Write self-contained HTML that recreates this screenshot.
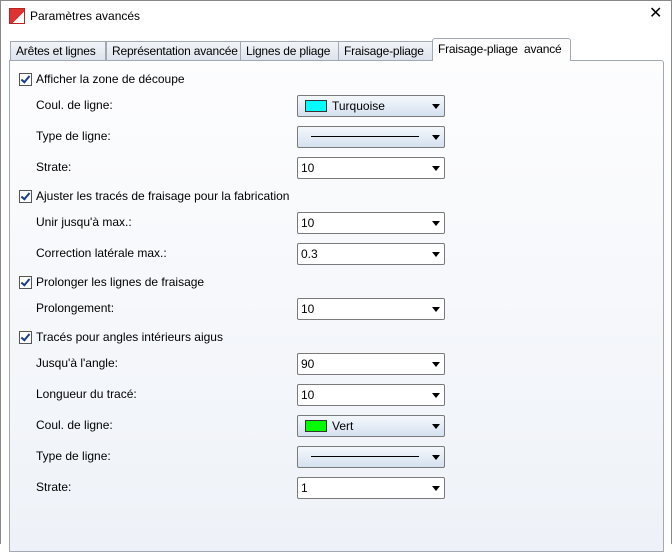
<!DOCTYPE html><html><head><style>
body{margin:0;width:672px;height:543px;background:#fff;font-family:"Liberation Sans",sans-serif;font-size:12px;color:#000;position:relative;overflow:hidden}
.win{position:absolute;left:0;top:0;width:670px;height:543px;border-left:1px solid #888;border-right:1px solid #888;border-top:1px solid #888}
.abs{position:absolute}
.tab{position:absolute;top:41px;height:19px;border:1px solid #a0a8b4;border-bottom:none;background:linear-gradient(#f2f4f8,#dde3ec);line-height:18px;padding:0 5px;font-size:12px;box-sizing:border-box;white-space:nowrap;overflow:hidden;letter-spacing:-0.2px}
.panel{position:absolute;left:9px;top:60px;width:653px;height:490px;border:1px solid #a0a8b4;border-radius:0 3px 0 0;background:linear-gradient(#fdfdfe,#eef2f8)}
.cb{position:absolute;left:19px;width:11px;height:11px;border:1px solid #555;background:#fff}
.cb:after{content:"";position:absolute;left:3px;top:0px;width:3px;height:7px;border:solid #1a3a8a;border-width:0 2px 2px 0;transform:rotate(40deg)}
.lbl{position:absolute;left:36px;line-height:14px;white-space:nowrap}
.cl{position:absolute;left:36px;line-height:14px;white-space:nowrap}
.combo{position:absolute;left:297px;width:146px;height:20px;border:1px solid #7a7a7a;border-radius:2px;background:#fff}
.combo.g{background:linear-gradient(#f4f8fc,#d5e1f0)}
.combo .t{position:absolute;left:3px;top:3px}
.combo .ar{position:absolute;right:4px;top:8px;border-left:4px solid transparent;border-right:4px solid transparent;border-top:5px solid #000}
.sw{position:absolute;left:7px;top:4px;width:20px;height:10px;border:1px solid #333}
.line{position:absolute;left:13px;top:9px;width:108px;height:1px;background:#000}
</style></head><body>
<div class="win"></div>
<div class="abs" style="left:9px;top:8px;width:14px;height:14px;background:linear-gradient(135deg,#d33 0 60%,#fff 60%);border:1px solid #b22"></div>
<div class="abs" style="left:30px;top:9px;font-size:12px">Paramètres avancés</div>
<div class="abs" style="left:649px;top:3px;font-size:16px">✕</div>
<div class="panel"></div>
<div class="tab" style="left:10px;width:96px">Arêtes et lignes</div>
<div class="tab" style="left:106px;width:135px">Représentation avancée</div>
<div class="tab" style="left:240px;width:99px">Lignes de pliage</div>
<div class="tab" style="left:338px;width:95px">Fraisage-pliage</div>
<div class="tab" style="left:432px;top:38px;height:23px;width:139px;background:#fdfdfe;line-height:20px;border-radius:3px 3px 0 0">Fraisage-pliage&nbsp; avancé</div>

<div class="cb" style="top:73px"></div><div class="lbl" style="top:72px">Afficher la zone de découpe</div>
<div class="cl" style="top:98px">Coul. de ligne:</div>
<div class="combo g" style="top:95px"><div class="sw" style="background:#0ff"></div><div class="t" style="left:34px">Turquoise</div><div class="ar"></div></div>
<div class="cl" style="top:129px">Type de ligne:</div>
<div class="combo g" style="top:126px"><div class="line"></div><div class="ar"></div></div>
<div class="cl" style="top:160px">Strate:</div>
<div class="combo" style="top:157px"><div class="t">10</div><div class="ar"></div></div>

<div class="cb" style="top:190px"></div><div class="lbl" style="top:189px">Ajuster les tracés de fraisage pour la fabrication</div>
<div class="cl" style="top:215px">Unir jusqu'à max.:</div>
<div class="combo" style="top:212px"><div class="t">10</div><div class="ar"></div></div>
<div class="cl" style="top:246px">Correction latérale max.:</div>
<div class="combo" style="top:243px"><div class="t">0.3</div><div class="ar"></div></div>

<div class="cb" style="top:276px"></div><div class="lbl" style="top:275px">Prolonger les lignes de fraisage</div>
<div class="cl" style="top:301px">Prolongement:</div>
<div class="combo" style="top:298px"><div class="t">10</div><div class="ar"></div></div>

<div class="cb" style="top:331px"></div><div class="lbl" style="top:330px">Tracés pour angles intérieurs aigus</div>
<div class="cl" style="top:356px">Jusqu'à l'angle:</div>
<div class="combo" style="top:353px"><div class="t">90</div><div class="ar"></div></div>
<div class="cl" style="top:387px">Longueur du tracé:</div>
<div class="combo" style="top:384px"><div class="t">10</div><div class="ar"></div></div>
<div class="cl" style="top:418px">Coul. de ligne:</div>
<div class="combo g" style="top:415px"><div class="sw" style="background:#0f0"></div><div class="t" style="left:34px">Vert</div><div class="ar"></div></div>
<div class="cl" style="top:449px">Type de ligne:</div>
<div class="combo g" style="top:446px"><div class="line"></div><div class="ar"></div></div>
<div class="cl" style="top:480px">Strate:</div>
<div class="combo" style="top:477px"><div class="t">1</div><div class="ar"></div></div>
</body></html>
